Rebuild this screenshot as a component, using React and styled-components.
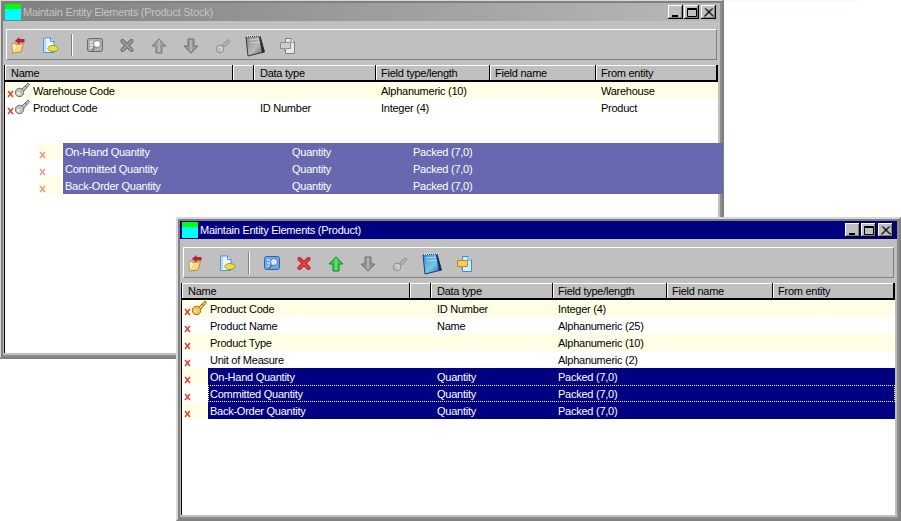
import React from 'react';
import styled, { createGlobalStyle } from 'styled-components';

const Global = createGlobalStyle`
  html, body { margin: 0; padding: 0; background: #fff; }
  * { box-sizing: border-box; }
`;

const Desktop = styled.div`
  position: relative;
  width: 901px;
  height: 521px;
  overflow: hidden;
  background: #fff;
  font-family: "Liberation Sans", Arial, sans-serif;
  font-size: 11px;
  letter-spacing: -0.25px;
  color: #000;
`;
const EdgeLine = styled.div`
  position: absolute;
  left: 723px;
  top: 0;
  width: 133px;
  height: 1px;
  background: #e8ffff;
`;
const Win = styled.div`
  position: absolute;
  left: ${p => p.$x}px;
  top: ${p => p.$y}px;
  width: ${p => p.$w}px;
  height: ${p => p.$h}px;
  display: flex;
  flex-direction: column;
  background: #c0c0c0;
  border: 2px solid #808080;
  border-top-color: #d8d8d8;
  border-left-color: #d8d8d8;
  padding: 2px;
  box-shadow: inset 2px 2px 0 #808080, inset -2px -2px 0 #8c8c8c;
`;
const TitleBar = styled.div`
  flex: none;
  height: 18px;
  display: flex;
  align-items: center;
  padding: 0 4px 0 2px;
  color: ${p => (p.$active ? '#fff' : '#c4c4c4')};
  background: ${p => (p.$active ? '#000080' : 'linear-gradient(90deg, #808080, #b8b8b8)')};
`;
const AppIcon = styled.div`
  width: 16px;
  height: 16px;
  margin-right: 2px;
  background: linear-gradient(#00ff00 0 5px, #00ffff 5px);
`;
const TitleText = styled.span`
  flex: 1;
  white-space: nowrap;
`;
const WinButton = styled.div`
  width: 15px;
  height: 14px;
  display: flex;
  align-items: center;
  justify-content: center;
  margin-left: ${p => p.$gap}px;
  background: #c0c0c0;
  box-shadow: inset -1px -1px 0 #000, inset 1px 1px 0 #fff, inset -2px -2px 0 #808080;
`;
const Toolbar = styled.div`
  flex: none;
  height: 31px;
  margin: 8px 3px 0;
  padding-top: 2px;
  display: flex;
  align-items: center;
  gap: 8px;
  border: 1px solid;
  border-color: #fff #808080 #808080 #fff;
`;
const ToolButton = styled.div`
  width: 24px;
  height: 24px;
  flex: none;
  display: flex;
  align-items: center;
  justify-content: center;
  margin-left: ${p => (p.$first ? -1 : 0)}px;
  filter: ${p => (p.$gray ? `grayscale(1) brightness(${p.$bright || 1})` : 'none')};
`;
const Separator = styled.div`
  flex: none;
  width: 2px;
  height: 22px;
  margin: -2px 2px 0 1px;
  background: linear-gradient(90deg, #808080 50%, #fff 50%);
`;
const Grid = styled.div`
  flex: 1;
  min-height: 0;
  margin: 5px 2px 2px 1px;
  display: flex;
  flex-direction: column;
  background: #fff;
  border-left: 1px solid #000;
`;
const HeaderRow = styled.div`
  flex: none;
  height: 17px;
  display: grid;
  grid-template-columns: 228px 21px 122px 114px 106px 1fr;
`;
const HeaderCell = styled.div`
  padding: 2px 0 0 ${p => (p.$tight ? 5 : 6)}px;
  line-height: 13px;
  background: #c0c0c0;
  border-right: 1px solid #000;
  border-bottom: 2px solid #000;
  box-shadow: inset 1px 1px 0 #fff;
  &:last-child { border-right-width: 2px; }
`;
const Body = styled.div`
  flex: 1;
  display: flex;
  flex-direction: column;
`;
const RowBox = styled.div`
  height: 17px;
  flex: none;
  display: grid;
  grid-template-columns: ${p => p.$mark}px ${p => 255 - p.$mark}px 121px 114px 106px 1fr;
  background: ${p => (p.$cream ? p.$creamColor || '#ffffe6' : 'transparent')};
`;
const Marker = styled.div`
  display: flex;
  align-items: flex-end;
  padding-left: 2px;
`;
const Cell = styled.div`
  padding: 1px 0 0 ${p => p.$pad}px;
  line-height: 16px;
  white-space: nowrap;
  color: ${p => (p.$selected ? '#fff' : '#000')};
  background: ${p => p.$selected || 'transparent'};
`;
const FocusLine = styled.div`
  position: absolute;
  left: ${p => p.$left}px;
  right: 0;
  top: 0;
  height: 17px;
  border-top: 1px dotted #fff;
  border-bottom: 1px dotted #fff;
  border-left: 1px dotted #ffff60;
  border-right: 1px dotted #ffff60;
  pointer-events: none;
`;
const Ghost = styled.div`
  position: absolute;
  left: 37px;
  top: 143px;
  width: 686px;
  clip-path: inset(0 0 0 1px);
`;
const RowWrap = styled.div`
  position: relative;
`;

const XMark = ({ fade }) => (
  <svg width="7" height="8" viewBox="0 0 7 8" style={{ flex: 'none', marginBottom: 1, opacity: fade ? 0.55 : 1 }}>
    <path d="M1 1 L6 7 M6 1 L1 7" stroke="#e23a3a" strokeWidth="1.5" fill="none" />
  </svg>
);

const RowKey = ({ gold }) => {
  const f = gold ? '#f4c35a' : '#c4c4c4';
  const s = gold ? '#a86a10' : '#707070';
  return (
    <svg width="16" height="16" viewBox="0 0 16 16" style={{ flex: 'none', marginBottom: 1 }}>
      <path d="M8 7 L14 1 L15.5 2.5 L10 9" fill={f} stroke={s} strokeWidth="1" />
      <path d="M11 4 L13 6" stroke={s} strokeWidth="1" />
      <circle cx="5.5" cy="10.5" r="4.2" fill={f} stroke={s} strokeWidth="1" />
      <circle cx="4.5" cy="11.5" r="1.2" fill={gold ? '#fff3c0' : '#fff'} />
    </svg>
  );
};

const IconFolder = () => (
  <svg width="16" height="17" viewBox="0 0 16 17">
    <path d="M2 6.5 L6 5.5 V8 L13.5 6.5 L11 15 L2.5 16 Z" fill="#f8d880" stroke="#b89048" />
    <path d="M2.5 7 L3 15 L6.5 9 L12.5 7.5 L6 8.5 Z" fill="#fff0b8" />
    <path d="M5 3.8 L9.5 0 V2 H14.5 V5.5 H9.5 V7.5 Z" fill="#b82034" />
  </svg>
);
const IconDoc = () => (
  <svg width="17" height="17" viewBox="0 0 17 17">
    <path d="M1.5 1 H8.5 L12 4.5 V15.5 H1.5 Z" fill="#eef6fe" stroke="#4c94dc" />
    <path d="M2.5 2 V14.5 H4 V2 Z" fill="#a8d0f4" />
    <path d="M8.5 1 V4.5 H12" fill="#cfe6fb" stroke="#4c94dc" />
    <ellipse cx="11" cy="11.5" rx="5.2" ry="3" fill="#e8e040" stroke="#98982a" />
  </svg>
);
const IconView = () => (
  <svg width="16" height="15" viewBox="0 0 16 15">
    <rect x="0.5" y="0.5" width="15" height="13" rx="2" fill="#6aa8e8" stroke="#2a66b4" />
    <path d="M3 4 H6 M3 7 H6 M3 10 H6" stroke="#eaf4ff" strokeWidth="1" />
    <circle cx="10" cy="6" r="3.5" fill="#dbe9f6" stroke="#6a78a8" />
    <path d="M7.5 9 L5 12.5" stroke="#5a6a98" strokeWidth="1.5" />
  </svg>
);
const IconX = () => (
  <svg width="14" height="13" viewBox="0 0 14 13">
    <path d="M2.5 2 L11.5 11 M11.5 2 L2.5 11" stroke="#a82828" strokeWidth="4" strokeLinecap="round" />
    <path d="M2.5 2 L11.5 11 M11.5 2 L2.5 11" stroke="#ee3a3a" strokeWidth="2.4" strokeLinecap="round" />
  </svg>
);
const IconArrow = ({ up, fill, stroke }) => (
  <svg width="16" height="16" viewBox="0 0 16 16" style={{ transform: up ? 'none' : 'scaleY(-1)' }}>
    <path d="M8 0.8 L15 8 H11 V15 H5 V8 H1 Z" fill={fill} stroke={stroke} strokeLinejoin="round" />
    <path d="M8 2.5 V14" stroke="#fff" strokeOpacity="0.25" strokeWidth="2" />
  </svg>
);
const IconKey = () => (
  <svg width="16" height="16" viewBox="0 0 16 16">
    <path d="M7.5 7 L13 1.5 L15 3.5 L9.5 9 Z" fill="#b4b4b4" stroke="#8c8c8c" />
    <circle cx="5" cy="11" r="3.8" fill="#d0d0d0" stroke="#8c8c8c" />
    <circle cx="4" cy="12" r="1.3" fill="#f0f0f0" stroke="#808080" strokeWidth="0.6" />
  </svg>
);
const IconNotes = ({ id }) => (
  <svg width="20" height="22" viewBox="0 0 20 22">
    <defs>
      <linearGradient id={id} x1="0" y1="0" x2="1" y2="1">
        <stop offset="0" stopColor="#3a88e0" />
        <stop offset="0.55" stopColor="#70cce0" />
        <stop offset="1" stopColor="#2858b8" />
      </linearGradient>
    </defs>
    <path d="M1 2 L15 1 L19.5 17 L3 21 Z" fill={`url(#${id})`} stroke="#283878" />
    <path d="M4 5 L14 4 M5 8 L15 7" stroke="#a8dcf4" strokeWidth="1" />
    <path d="M15 1 L19.5 17 L17 18 L14 2 Z" fill="#222a60" />
    <path d="M2 1.5 L15 0.5" stroke="#e8f0ff" strokeWidth="1.6" strokeDasharray="1 1" />
  </svg>
);
const IconCopy = () => (
  <svg width="17" height="18" viewBox="0 0 17 18">
    <path d="M6.5 1.5 H12 L15.5 5 V16.5 H6.5 Z" fill="#d4ecfc" stroke="#3c8cd4" />
    <path d="M12 1.5 V5 H15.5" fill="#fff" stroke="#3c8cd4" />
    <path d="M1.5 5.5 H11.5 V11.5 H7 L5.5 13.5 V11.5 H1.5 Z" fill="#f8cc58" stroke="#b88a28" />
  </svg>
);
const Glyph = ({ kind }) => {
  if (kind === 'min') return <svg width="10" height="9" viewBox="0 0 10 9"><path d="M1 8 H7" stroke="#000" strokeWidth="2" /></svg>;
  if (kind === 'max') return <svg width="10" height="9" viewBox="0 0 10 9"><path d="M0.5 0.5 H9.5 V8.5 H0.5 Z M0 1.5 H10" stroke="#000" fill="none" /></svg>;
  return <svg width="10" height="9" viewBox="0 0 10 9"><path d="M1 0.5 L9 8.5 M9 0.5 L1 8.5 M2 0.5 L10 8.5 M8 0.5 L0 8.5" stroke="#000" fill="none" /></svg>;
};

const columns = ['Name', '', 'Data type', 'Field type/length', 'Field name', 'From entity'];

const Row = ({ mark = 26, cream, creamColor, name, type, field, from, keyKind, selected, focus, fade }) => (
  <RowWrap>
    <RowBox $mark={mark} $cream={cream} $creamColor={creamColor}>
      <Marker>
        <XMark fade={fade} />
        {keyKind && <RowKey gold={keyKind === 'gold'} />}
      </Marker>
      <Cell $pad={2} $selected={selected}>{name}</Cell>
      <Cell $pad={0} $selected={selected}>{type}</Cell>
      <Cell $pad={0} $selected={selected}>{field}</Cell>
      <Cell $pad={0} $selected={selected} />
      <Cell $pad={0} $selected={selected}>{from}</Cell>
    </RowBox>
    {focus && <FocusLine $left={mark} />}
  </RowWrap>
);

const Window = ({ x, y, w, h, active, title, id, tools, children }) => (
  <Win $x={x} $y={y} $w={w} $h={h}>
    <TitleBar $active={active}>
      <AppIcon />
      <TitleText>{title}</TitleText>
      <WinButton $gap={0}><Glyph kind="min" /></WinButton>
      <WinButton $gap={1}><Glyph kind="max" /></WinButton>
      <WinButton $gap={2}><Glyph kind="close" /></WinButton>
    </TitleBar>
    <Toolbar>
      <ToolButton $first><IconFolder /></ToolButton>
      <ToolButton><IconDoc /></ToolButton>
      <Separator />
      <ToolButton $gray={!tools.view} $bright={1.1}><IconView /></ToolButton>
      <ToolButton $gray={!tools.del} $bright={1.6}><IconX /></ToolButton>
      <ToolButton>
        {tools.up ? <IconArrow up fill="#38d048" stroke="#128a20" /> : <IconArrow up fill="#a0a0a0" stroke="#787878" />}
      </ToolButton>
      <ToolButton><IconArrow fill="#989898" stroke="#707070" /></ToolButton>
      <ToolButton><IconKey /></ToolButton>
      <ToolButton $gray={!tools.notes}><IconNotes id={`notes-${id}`} /></ToolButton>
      <ToolButton $gray={!tools.copy}><IconCopy /></ToolButton>
    </Toolbar>
    <Grid>
      <HeaderRow>
        {columns.map((c, i) => <HeaderCell key={i} $tight={i >= 3}>{c}</HeaderCell>)}
      </HeaderRow>
      <Body>{children}</Body>
    </Grid>
  </Win>
);

const ghostRows = [
  { name: 'On-Hand Quantity', cream: true },
  { name: 'Committed Quantity' },
  { name: 'Back-Order Quantity', cream: true },
];

const productRows = [
  { name: 'Product Code', type: 'ID Number', field: 'Integer (4)', cream: true, keyKind: 'gold' },
  { name: 'Product Name', type: 'Name', field: 'Alphanumeric (25)' },
  { name: 'Product Type', field: 'Alphanumeric (10)', cream: true },
  { name: 'Unit of Measure', field: 'Alphanumeric (2)' },
  { name: 'On-Hand Quantity', type: 'Quantity', field: 'Packed (7,0)', cream: true, selected: '#000080' },
  { name: 'Committed Quantity', type: 'Quantity', field: 'Packed (7,0)', selected: '#000080', focus: true },
  { name: 'Back-Order Quantity', type: 'Quantity', field: 'Packed (7,0)', cream: true, selected: '#000080' },
];

export default function App() {
  return (
    <Desktop>
      <Global />
      <EdgeLine />
      <Window x={-1} y={-1} w={725} h={360} title="Maintain Entity Elements (Product Stock)" id="a" tools={{ up: false }}>
        <Row cream keyKind="silver" name="Warehouse Code" field="Alphanumeric (10)" from="Warehouse" />
        <Row keyKind="silver" name="Product Code" type="ID Number" field="Integer (4)" from="Product" />
      </Window>
      <Ghost>
        {ghostRows.map(r => (
          <Row key={r.name} fade cream={r.cream} creamColor="#ffffe9" name={r.name} type="Quantity" field="Packed (7,0)" selected="#6868b0" />
        ))}
      </Ghost>
      <Window x={176} y={217} w={725} h={304} active title="Maintain Entity Elements (Product)" id="b" tools={{ view: true, del: true, up: true, notes: true, copy: true }}>
        {productRows.map(r => <Row key={r.name} {...r} />)}
      </Window>
    </Desktop>
  );
}
